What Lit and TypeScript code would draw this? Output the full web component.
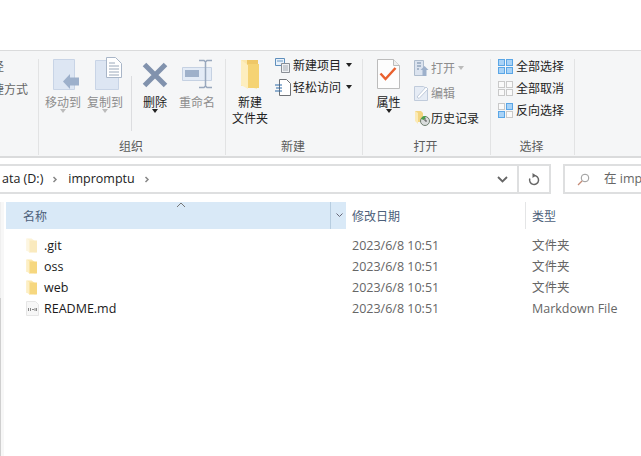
import { LitElement, html, css, svg } from "lit";
import { customElement } from "lit/decorators.js";

const moveIcon = html`<svg width="32" height="34" viewBox="0 0 32 34"><path d="M6.500 2.500h21v30h-21z" fill="#dde6f3" stroke="#c8d4e6"/><path d="M23 17v15L16 24.500z" fill="#9db0cb"/><path d="M23 20.500h9v8h-9z" fill="#9db0cb"/></svg>`;
const copyIcon = html`<svg width="34" height="34" viewBox="0 0 34 34"><path d="M7.500 3.500h21l2 2v27h-23z" fill="#dde6f3" stroke="#c8d4e6"/><path d="M18.500.500h9l6 6v14h-15z" fill="#fff" stroke="#a9b6c8"/><path d="M21 6h6M21 9h10M21 12h10M21 15h10M21 18h10" stroke="#9aa8ba"/></svg>`;
const delIcon = html`<svg width="26" height="34" viewBox="0 0 26 34"><path d="M2.500 7.500l21 21M23.500 7.500l-21 21" stroke="#8192ad" stroke-width="5"/></svg>`;
const renameIcon = html`<svg width="34" height="34" viewBox="0 0 34 34"><path d="M2.500 10.500h29v13h-29z" fill="#e3ebf6" stroke="#c5d1e2"/><path d="M5 13h14v7H5z" fill="#9fb1ca"/><path d="M19 3.500h5l1.500 1.500 1.500-1.500h5M25.500 5v24M19 30.500h5l1.500-1.500 1.500 1.500h5" fill="none" stroke="#99a8bd" stroke-width="1.500"/></svg>`;
const folderBig = html`<svg width="20" height="34" viewBox="0 0 20 34"><path d="M1 3h9l7 5v24l-9-3H1z" fill="#fbe7ac"/><path d="M7 3h11v26H7z" fill="#efc767"/><path d="M8 7h11v24H8z" fill="#f5d374"/><path d="M1 3l7 5v24l-7-4z" fill="#fdeebf"/></svg>`;
const newItem = html`<svg width="16" height="15" viewBox="0 0 16 15"><path d="M.500.500h9v7h-9z" fill="#e8f1fa" stroke="#5f8fbd"/><path d="M2 2h6v2H2z" fill="#a8c4de"/><path d="M6.500 5.500h8v9h-8z" fill="#eef0f3" stroke="#8a8f96"/><path d="M8 8h5M8 10h5M8 12h5" stroke="#a5abb3"/></svg>`;
const easyAccess = html`<svg width="16" height="17" viewBox="0 0 16 17"><path d="M4.500.500h7l4 4v12h-11z" fill="#fff" stroke="#6f7277"/><path d="M0 6h7M1 9h6M0 12h7" stroke="#2c6ba8"/></svg>`;
const propIcon = html`<svg width="23" height="34" viewBox="0 0 23 34"><path d="M.500 2.500h16l6 6v23H.500z" fill="#fdfdfd" stroke="#bcbcbc"/><path d="M16.500 2.500v6h6" fill="#eee" stroke="#bcbcbc"/><path d="M3.500 16.500l5 5.500 10-11" fill="none" stroke="#e9602e" stroke-width="2.500"/></svg>`;
const openIcon = html`<svg width="15" height="16" viewBox="0 0 15 16"><path d="M.500.500h9v15h-9z" fill="#dbe3ef" stroke="#aebccd"/><path d="M3 3h4M3 6h4M3 9h2" stroke="#94a6bd" stroke-width="1.500"/><path d="M10.500 6l4 4h-2v6h-4v-6h-2z" fill="#9db0cb"/></svg>`;
const editIcon = html`<svg width="15" height="16" viewBox="0 0 15 16"><path d="M.500 1.500h9l4 3v11H.500z" fill="#e6ecf5" stroke="#c0cbdb"/><path d="M3 12l9-10 2 2-9 9.500z" fill="#fff" stroke="#c0cbdb"/></svg>`;
const historyIcon = html`<svg width="16" height="16" viewBox="0 0 16 16"><path d="M1 1h6l2 2v9H3L1 10z" fill="#f3d580"/><path d="M1 1l3 2v11l-3-3z" fill="#fbeab6"/><circle cx="11" cy="11" r="4.500" fill="#d9dcdc" stroke="#6f7f70"/><path d="M7 9a4.500 4.500 0 0 1 5-3l-2 4z" fill="#49a04b"/><path d="M11 8v3h2" fill="none" stroke="#555"/></svg>`;
const grid = (cells: string[]) => {
  const rects = [
    [0.5, 0.5],
    [8.5, 0.5],
    [0.5, 8.5],
    [8.5, 8.5],
  ];
  return html`<svg width="15" height="15" viewBox="0 0 15 15">
    ${rects.map(
      ([x, y], i) =>
        svg`<rect x=${x} y=${y} width="6" height="6" fill=${cells[i] === "b" ? "#a9d3f7" : "#fafafa"} stroke=${cells[i] === "b" ? "#5aa6e6" : "#c9c9c9"}/>`,
    )}
  </svg>`;
};
const smallFolder = (light = false) => html`<svg class=${light ? "ghost" : ""} width="11" height="16" viewBox="0 0 11 16"><path d="M.500.500h5l4 3v11l-5-1.500H.500z" fill="#fbe7ac"/><path d="M3 2.500h8v12H3z" fill="#f6d77f"/><path d="M.500.500l3 2v12l-3-2z" fill="#fdefc4"/></svg>`;
const mdIcon = html`<svg width="13" height="15" viewBox="0 0 13 15"><path d="M.500.500h9l3 3v11H.500z" fill="#f7f7f7" stroke="#e6e6e6"/><path d="M2.500 7v3M4.500 7v3M6 8.500h2M9 7v3M10.500 7v3" stroke="#888"/></svg>`;

@customElement("app-root")
export class AppRoot extends LitElement {
  static styles = css`
    :host {
      display: block;
      width: 641px;
      height: 456px;
      overflow: hidden;
      background: #fff;
      font-family: "Noto Sans CJK SC", "Noto Sans", sans-serif;
      font-size: 12px;
      line-height: 16px;
      color: #333;
    }
    .ghost { opacity: 0.5; }
    .top { height: 50px; }
    .ribbon {
      display: flex;
      height: 105px;
      background: #f5f6f7;
      border-top: 1px solid #dadbdc;
      border-bottom: 2px solid #dadbdc;
    }
    .group {
      position: relative;
      flex: none;
      margin: 8px 0 1px;
      border-right: 1px solid #e2e3e4;
      box-sizing: border-box;
      display: flex;
      flex-direction: column;
    }
    .g0 { width: 39px; overflow: hidden; }
    .g1 { width: 187px; }
    .g2 { width: 137px; }
    .g3 { width: 128px; }
    .g4 { width: 84px; }
    .body { flex: 1; display: flex; min-height: 0; }
    .cap {
      height: 18px;
      line-height: 18px;
      text-align: center;
      color: #5b5b5b;
      flex: none;
      padding-right: 2px;
    }
    .clip { margin: -1px 0 0 -44px; display: flex; flex-direction: column; gap: 7px; white-space: nowrap; color: #666; }
    .big {
      display: flex;
      flex-direction: column;
      align-items: center;
      flex: none;
      color: #222;
      margin-top: -2px;
    }
    .big .ic { height: 34px; display: flex; align-items: flex-start; justify-content: center; }
    .big .lb { margin-top: 3px; text-align: center; white-space: nowrap; }
    .off { color: #8d8d8d; }
    .sep { width: 1px; height: 55px; background: #dcdde0; margin: 17px 0 0 2px; flex: none; }
    .caret { width: 0; height: 0; border: 3.5px solid transparent; border-top: 4px solid #222; border-bottom: 0; margin-top: -1px; flex: none; }
    .item .caret { margin-top: 0; }
    .caret.dim { border-top-color: #bbb; }
    .list { display: flex; flex-direction: column; }
    .item { display: flex; align-items: center; white-space: nowrap; color: #222; height: 22px; }
    .tall { height: 25px; }
    .muted { color: #8d8d8d; }
    .addr-row { display: flex; height: 30px; margin-top: 6px; }
    .addr {
      width: 551px;
      box-sizing: border-box;
      border: 2px solid #dedfe0;
      border-left: 0;
      display: flex;
      align-items: center;
      flex: none;
      font-family: "Open Sans", "Noto Sans CJK SC", sans-serif;
      font-size: 12.5px;
      color: #222;
    }
    .crumb { margin-left: 2px; white-space: nowrap; }
    .chev { margin: 0 10px 0 9px; flex: none; }
    .grow { flex: 1; }
    .cell { width: 30px; display: flex; align-items: center; justify-content: center; align-self: stretch; flex: none; }
    .cell + .cell { border-left: 2px solid #dedfe0; }
    .search {
      margin-left: 12px;
      flex: 1;
      min-width: 0;
      border: 2px solid #dedfe0;
      border-right: 0;
      display: flex;
      align-items: center;
      padding-left: 12px;
      gap: 14px;
      color: #666;
      font-family: "Open Sans", "Noto Sans CJK SC", sans-serif;
      font-size: 12.5px;
      white-space: nowrap;
      overflow: hidden;
    }
    .search svg { flex: none; }
    .view { position: relative; display: flex; flex-direction: column; padding-left: 6px; margin-top: 8px; }
    .rail { position: absolute; left: 0; top: 0; width: 1px; height: 254px; border-right: 3px solid #f7f7f7; background: linear-gradient(#efefef 96px, #cfcfcf 96px); }
    .head { display: flex; height: 27px; color: #4c607a; }
    .hname {
      position: relative;
      width: 340px;
      background: #d9e9f7;
      display: flex;
      align-items: center;
      padding-left: 17px;
      box-sizing: border-box;
    }
    .sort { position: absolute; left: 170px; top: 0; }
    .drop { position: absolute; left: 324px; top: 0; bottom: 0; width: 16px; border-left: 1px solid #b7cde0; display: flex; align-items: center; justify-content: center; }
    .hdate { width: 180px; padding-left: 6px; box-sizing: border-box; display: flex; align-items: center; border-right: 1px solid #e4e5e6; }
    .htype { padding-left: 6px; display: flex; align-items: center; }
    .rows { padding-top: 6px; }
    .row { display: flex; height: 21px; align-items: center; font-family: "Open Sans", "Noto Sans CJK SC", sans-serif; font-size: 12.5px; }
    .n { width: 346px; display: flex; align-items: center; color: #1a1a1a; padding-left: 20px; box-sizing: border-box; }
    .n .fi { width: 18px; flex: none; display: flex; align-items: center; }
    .d { width: 180px; color: #666; }
    .t { color: #666; white-space: nowrap; font-size: 12.5px; }
    .pad1 { padding-left: 6px; }
    .pad4 { padding-left: 7px; }
    .up5 { margin-top: -5px; padding-left: 1px; }
    .up4 { margin-top: -4px; }
    .ml1 { margin-left: 1px; }
    .ml2 { margin-left: 2px; }
    .ml3 { margin-left: 3px; }
    .mr5 { margin: 0 5px 0 2px; }
    .mr3 { margin: 0 3px 0 2px; }
  `;

  private big(icon: unknown, label: unknown, w: number, off = false, caret?: "dark" | "dim") {
    return html`<div class="big ${off ? "off" : ""}" style="width:${w}px">
      <div class="ic">${icon}</div>
      <div class="lb">${label}</div>
      ${caret ? html`<div class="caret ${caret === "dim" ? "dim" : ""}"></div>` : ""}
    </div>`;
  }

  render() {
    const rows = [
      [smallFolder(true), ".git", "文件夹"],
      [smallFolder(), "oss", "文件夹"],
      [smallFolder(), "web", "文件夹"],
      [mdIcon, "README.md", "Markdown File"],
    ];
    const chev = html`<svg class="chev" width="6" height="9" viewBox="0 0 6 9"><path d="M1.500 2l2.500 2.500L1.500 7" fill="none" stroke="#888" stroke-width="1.500"/></svg>`;
    return html`
      <div class="top"></div>
      <div class="ribbon">
        <div class="group g0">
          <div class="body"><div class="clip"><span>复制路径</span><span>粘贴快捷方式</span></div></div>
        </div>
        <div class="group g1">
          <div class="body pad1">
            ${this.big(moveIcon, "移动到", 36, true, "dim")}
            ${this.big(copyIcon, "复制到", 48, true, "dim")}
            <div class="sep"></div>
            ${this.big(delIcon, "删除", 46, false, "dark")}
            ${this.big(renameIcon, "重命名", 38, true)}
          </div>
          <div class="cap">组织</div>
        </div>
        <div class="group g2">
          <div class="body">
            ${this.big(folderBig, html`新建<br />文件夹`, 48)}
            <div class="list up5">
              <div class="item">${newItem}<span class="mr5">新建项目</span><div class="caret"></div></div>
              <div class="item">${easyAccess}<span class="mr5">轻松访问</span><div class="caret"></div></div>
            </div>
          </div>
          <div class="cap">新建</div>
        </div>
        <div class="group g3">
          <div class="body">
            ${this.big(propIcon, "属性", 51, false, "dark")}
            <div class="list up4">
              <div class="item tall muted">${openIcon}<span class="mr3">打开</span><div class="caret dim"></div></div>
              <div class="item tall muted">${editIcon}<span class="ml2">编辑</span></div>
              <div class="item tall">${historyIcon}<span class="ml1">历史记录</span></div>
            </div>
          </div>
          <div class="cap">打开</div>
        </div>
        <div class="group g4">
          <div class="body pad4">
            <div class="list up4">
              <div class="item">${grid(["b", "b", "b", "b"])}<span class="ml3">全部选择</span></div>
              <div class="item">${grid(["g", "g", "g", "g"])}<span class="ml3">全部取消</span></div>
              <div class="item">${grid(["g", "b", "b", "g"])}<span class="ml3">反向选择</span></div>
            </div>
          </div>
          <div class="cap">选择</div>
        </div>
      </div>
      <div class="addr-row">
        <div class="addr">
          <span class="crumb">ata (D:)</span>${chev}<span>impromptu</span>${chev}
          <span class="grow"></span>
          <div class="cell"><svg width="11" height="7" viewBox="0 0 11 7"><path d="M1 1l4.500 4.500L10 1" fill="none" stroke="#666" stroke-width="1.800"/></svg></div>
          <div class="cell"><svg width="12" height="13" viewBox="0 0 12 13"><path d="M6 2.500a4.500 4.500 0 1 1-4.200 3" fill="none" stroke="#666" stroke-width="1.500"/><path d="M4.500 0v5L8 2.500z" fill="#666"/></svg></div>
        </div>
        <div class="search">
          <svg width="13" height="13" viewBox="0 0 13 13"><circle cx="8" cy="5" r="3.800" fill="none" stroke="#999"/><path d="M5 8l-4 4" stroke="#c58a74" stroke-width="1.200"/></svg>
          <span>在 impromptu</span>
        </div>
      </div>
      <div class="view">
        <div class="rail"></div>
        <div class="head">
          <div class="hname">名称
            <svg class="sort" width="10" height="6" viewBox="0 0 10 6"><path d="M1 5l4-4 4 4" fill="none" stroke="#777"/></svg>
            <div class="drop"><svg width="7" height="5" viewBox="0 0 7 5"><path d="M.500.500l3 3 3-3" fill="none" stroke="#667"/></svg></div>
          </div>
          <div class="hdate">修改日期</div>
          <div class="htype">类型</div>
        </div>
        <div class="rows">
          ${rows.map(
            ([ic, n, t]) => html`<div class="row">
              <div class="n"><span class="fi">${ic}</span>${n}</div>
              <div class="d">2023/6/8 10:51</div>
              <div class="t">${t}</div>
            </div>`,
          )}
        </div>
      </div>
    `;
  }
}
